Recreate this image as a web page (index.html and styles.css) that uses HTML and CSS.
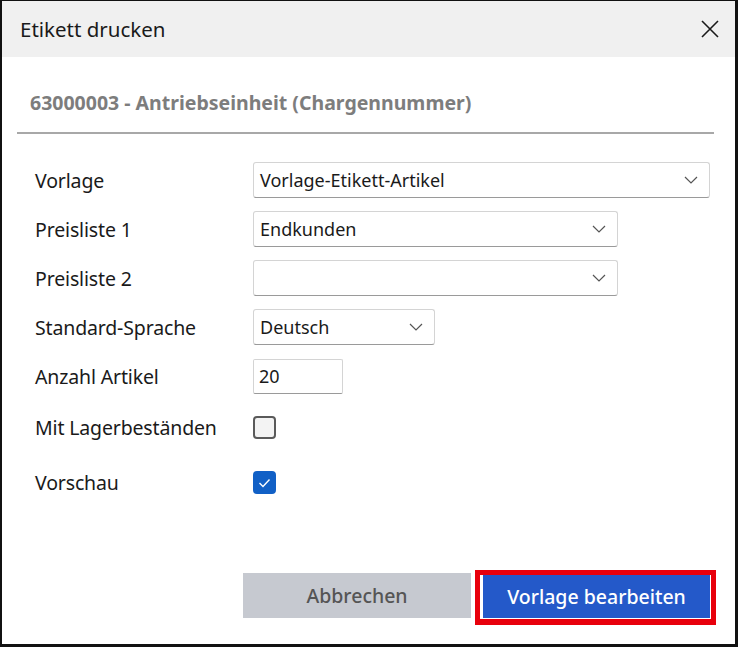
FILE: index.html
```html
<!DOCTYPE html>
<html lang="de">
<head>
<meta charset="utf-8">
<title>Etikett drucken</title>
<link rel="stylesheet" href="styles.css">
</head>
<body>
<div class="window">
  <header class="titlebar">
    <span class="title">Etikett drucken</span>
    <svg class="close" width="18" height="18" viewBox="0 0 18 18" aria-label="Schließen">
      <path d="M1 1 L17 17 M17 1 L1 17" stroke="#1a1a1a" stroke-width="1.6" fill="none"/>
    </svg>
  </header>

  <main class="content">
    <h2 class="heading">63000003 - Antriebseinheit (Chargennummer)</h2>
    <div class="rule"></div>

    <div class="form">
      <div class="row">
        <span class="label">Vorlage</span>
        <div class="select w-wide"><span>Vorlage-Etikett-Artikel</span><svg class="chev" width="14" height="8" viewBox="0 0 14 8"><path d="M1 1 L7 7 L13 1" stroke="#555" stroke-width="1.2" fill="none"/></svg></div>
      </div>
      <div class="row">
        <span class="label">Preisliste 1</span>
        <div class="select w-mid"><span>Endkunden</span><svg class="chev" width="14" height="8" viewBox="0 0 14 8"><path d="M1 1 L7 7 L13 1" stroke="#555" stroke-width="1.2" fill="none"/></svg></div>
      </div>
      <div class="row">
        <span class="label">Preisliste 2</span>
        <div class="select w-mid"><span></span><svg class="chev" width="14" height="8" viewBox="0 0 14 8"><path d="M1 1 L7 7 L13 1" stroke="#555" stroke-width="1.2" fill="none"/></svg></div>
      </div>
      <div class="row">
        <span class="label">Standard-Sprache</span>
        <div class="select w-small"><span>Deutsch</span><svg class="chev" width="14" height="8" viewBox="0 0 14 8"><path d="M1 1 L7 7 L13 1" stroke="#555" stroke-width="1.2" fill="none"/></svg></div>
      </div>
      <div class="row">
        <span class="label">Anzahl Artikel</span>
        <div class="input">20</div>
      </div>
      <div class="row row-check">
        <span class="label">Mit Lagerbeständen</span>
        <span class="checkbox"></span>
      </div>
      <div class="row row-check">
        <span class="label">Vorschau</span>
        <span class="checkbox checked">
          <svg width="13" height="10" viewBox="0 0 13 10"><path d="M1.5 5 L5 8.5 L11.5 1.5" stroke="#fff" stroke-width="1.4" fill="none"/></svg>
        </span>
      </div>
    </div>
  </main>

  <footer class="actions">
    <button class="btn btn-cancel">Abbrechen</button>
    <span class="highlight"><button class="btn btn-primary">Vorlage bearbeiten</button></span>
  </footer>
</div>
</body>
</html>
```

FILE: styles.css
```css
* { box-sizing: border-box; }

html, body {
  margin: 0;
  padding: 0;
  background: #fff;
}

.window {
  width: 738px;
  height: 647px;
  border-style: solid;
  border-color: #111;
  border-width: 1px 3px 3px 2px;
  display: flex;
  flex-direction: column;
  font-family: "Noto Sans", "Open Sans", sans-serif;
  color: #1a1a1a;
}

.titlebar {
  height: 56px;
  flex: none;
  background: #f0f0f0;
  display: flex;
  align-items: center;
  justify-content: space-between;
  padding: 0 16px 0 18px;
}

.title {
  font-size: 20.5px;
  letter-spacing: 0;
}

.close { display: block; }

.content {
  flex: 1;
  padding: 0 21px 0 15px;
}

.heading {
  margin: 33px 0 0 13px;
  font-size: 19.5px;
  font-weight: 700;
  color: #7d7d7d;
  letter-spacing: 0;
  line-height: 26px;
  white-space: nowrap;
}

.rule {
  height: 2px;
  background: #a8a8a8;
  margin-top: 16px;
}

.form {
  margin-top: 28px;
  padding-left: 18px;
}

.row {
  display: flex;
  align-items: center;
  height: 36px;
  margin-bottom: 13px;
}

.row-check {
  height: 41px;
  margin-bottom: 14px;
}

.label {
  width: 218px;
  flex: none;
  font-size: 19.5px;
  letter-spacing: -0.15px;
  white-space: nowrap;
}

.select, .input {
  height: 36px;
  background: #fff;
  border: 1px solid #d4d4d4;
  border-bottom-color: #9a9a9a;
  border-radius: 3px;
  display: flex;
  align-items: center;
  padding: 0 0 0 6px;
  font-size: 18px;
}

.select span { flex: 1; }

.chev {
  margin-right: 11px;
  flex: none;
}

.w-wide  { width: 457px; }
.w-mid   { width: 365px; }
.w-small { width: 182px; }

.input {
  width: 90px;
  height: 35px;
  padding-left: 5px;
  border-radius: 2px;
}

.checkbox {
  width: 23px;
  height: 23px;
  border: 2px solid #5a5a5a;
  border-radius: 4px;
  background: #f3f3f3;
  display: flex;
  align-items: center;
  justify-content: center;
}

.checkbox.checked {
  background: #1160c6;
  border-color: #1160c6;
}

.actions {
  flex: none;
  display: flex;
  justify-content: flex-end;
  align-items: flex-start;
  gap: 4px;
  padding: 0 19px 19px 0;
}

.btn {
  font-family: "Noto Sans", "Open Sans", sans-serif;
  font-size: 19.5px;
  font-weight: 500;
  border: none;
  height: 45px;
  padding: 0;
  margin: 0;
  cursor: pointer;
}

.btn-cancel {
  width: 228px;
  background: #c6c9d0;
  color: #555;
  margin-top: 3px;
}

.highlight {
  display: flex;
  border: 5px solid #e8000c;
  border-bottom-width: 6px;
  padding: 0 1px 1px 3px;
  background: #fff;
}

.btn-primary {
  width: 227px;
  height: 43px;
  background: #2459c9;
  color: #fff;
}
```
